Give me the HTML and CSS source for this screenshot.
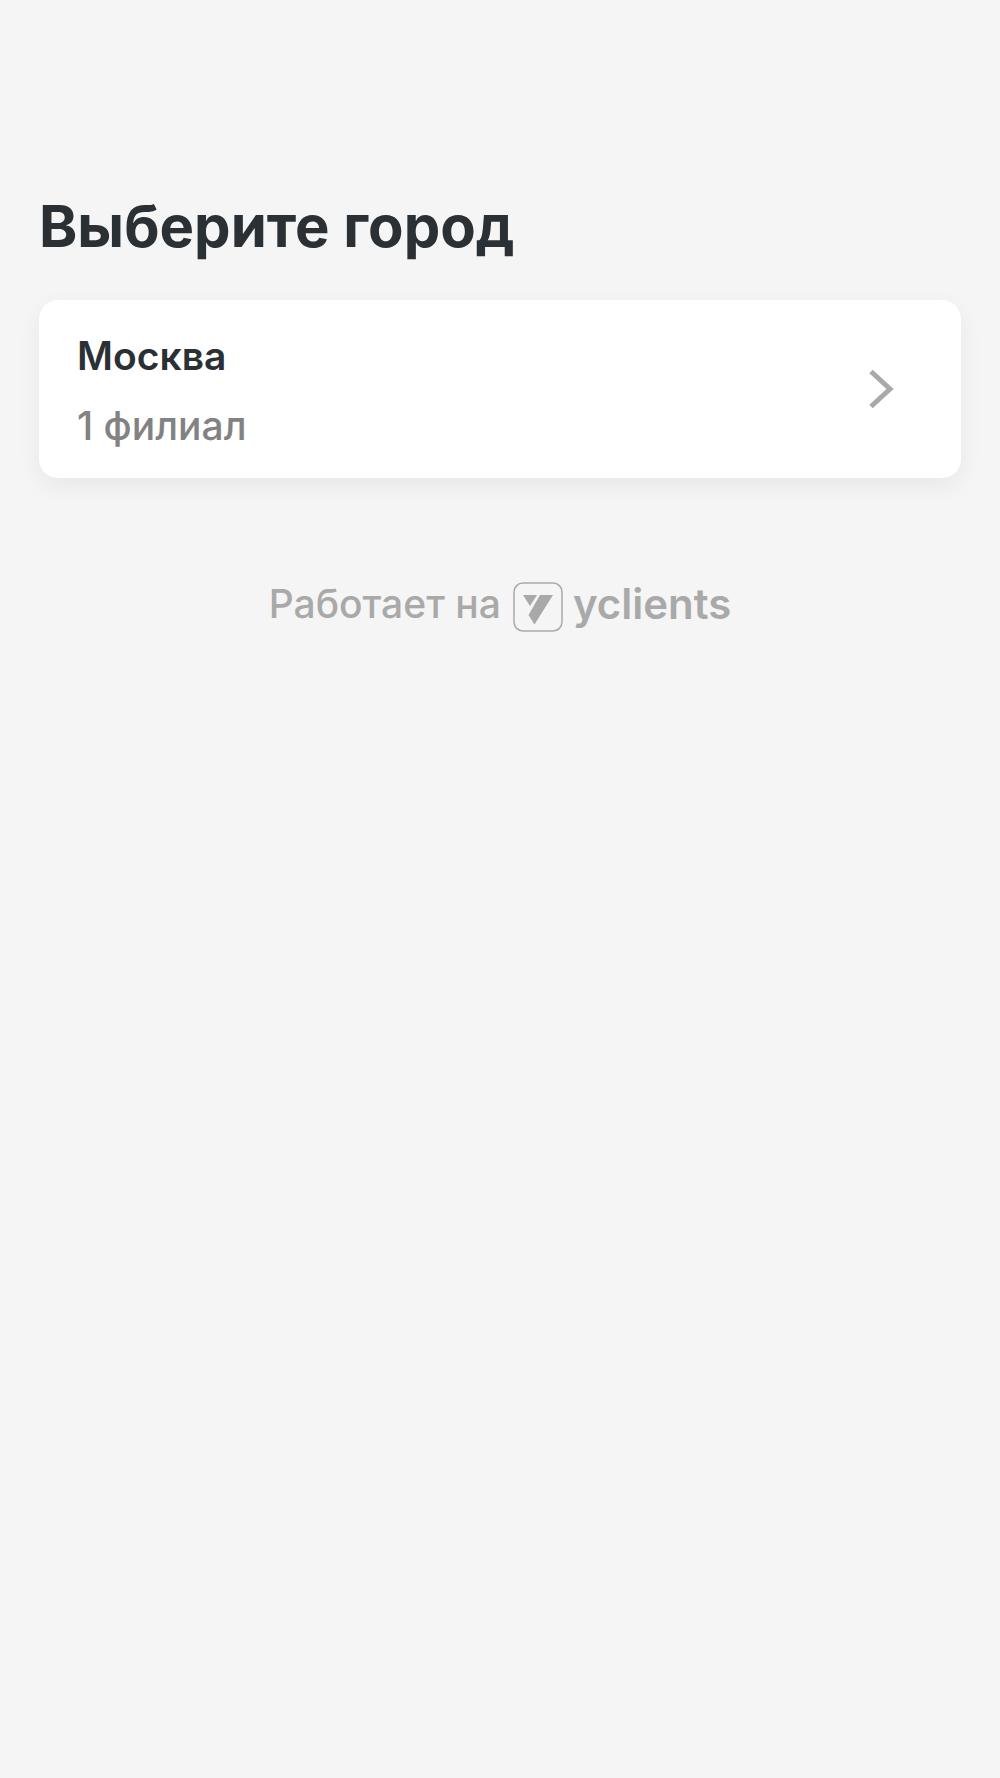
FILE: index.html
```html
<!DOCTYPE html>
<html lang="ru">
<head>
<meta charset="utf-8">
<meta name="viewport" content="width=device-width, initial-scale=1">
<title>Выберите город</title>
<link rel="stylesheet" href="styles.css">
</head>
<body>
<main class="page">
  <h1 class="title">Выберите город</h1>
  <button class="city" type="button">
    <span class="city-text">
      <span class="city-name">Москва</span>
      <span class="city-count">1 филиал</span>
    </span>
    <svg class="chevron" viewBox="0 0 26 40" aria-hidden="true"><path d="M2 2.5 21 20 2 37.5"/></svg>
  </button>
</main>
<footer class="footer">
  <span class="powered">Работает на</span>
  <a class="brand" href="#" aria-label="yclients">
    <svg class="logo" viewBox="0 0 50 50" aria-hidden="true">
      <rect class="logo-frame" x="1" y="1" width="48" height="48" rx="9" stroke-width="1.5"/>
      <path class="logo-mark" d="M10 13H24L17 24ZM27 13H40L21.5 42.5 15.500 33Z"/>
    </svg>
    <span class="wordmark">yclients</span>
  </a>
</footer>
</body>
</html>
```
FILE: styles.css
```css
body {
  margin: 0;
  background: #f5f5f5;
  color: #2b3034;
  font-family: Inter, "Liberation Sans", sans-serif;
}
.page { padding: 188px 39px 0; }
.title { margin: 0 0 36px; font-size: 58px; line-height: 76px; font-weight: 700; }
.city {
  display: flex;
  align-items: center;
  justify-content: space-between;
  width: 100%;
  padding: 28px 66px 24px 38px;
  border: 0;
  border-radius: 19px;
  background: #fff;
  box-shadow: 0 8px 24px rgba(0, 0, 0, 0.06);
  color: inherit;
  font: inherit;
  text-align: left;
  cursor: pointer;
}
.city-text { display: flex; flex-direction: column; gap: 14px; font-size: 39px; line-height: 56px; }
.city-name { font-weight: 600; }
.city-count { color: #828282; font-weight: 500; }
.chevron { width: 26px; height: 40px; margin-bottom: 4px; fill: none; stroke: #a9a9a9; stroke-width: 5; }
.footer {
  display: flex;
  justify-content: center;
  align-items: flex-start;
  gap: 12px;
  padding: 104px 20px;
  color: #a9a9a9;
  font-weight: 500;
}
.powered { font-size: 39px; line-height: 44px; }
.brand { display: flex; align-items: flex-start; gap: 10px; color: inherit; text-decoration: none; }
.logo { width: 50px; height: 50px; }
.logo-frame { fill: none; stroke: #a9a9a9; }
.logo-mark { fill: #a9a9a9; }
.wordmark { font-size: 42px; line-height: 44px; font-weight: 600; }
```
